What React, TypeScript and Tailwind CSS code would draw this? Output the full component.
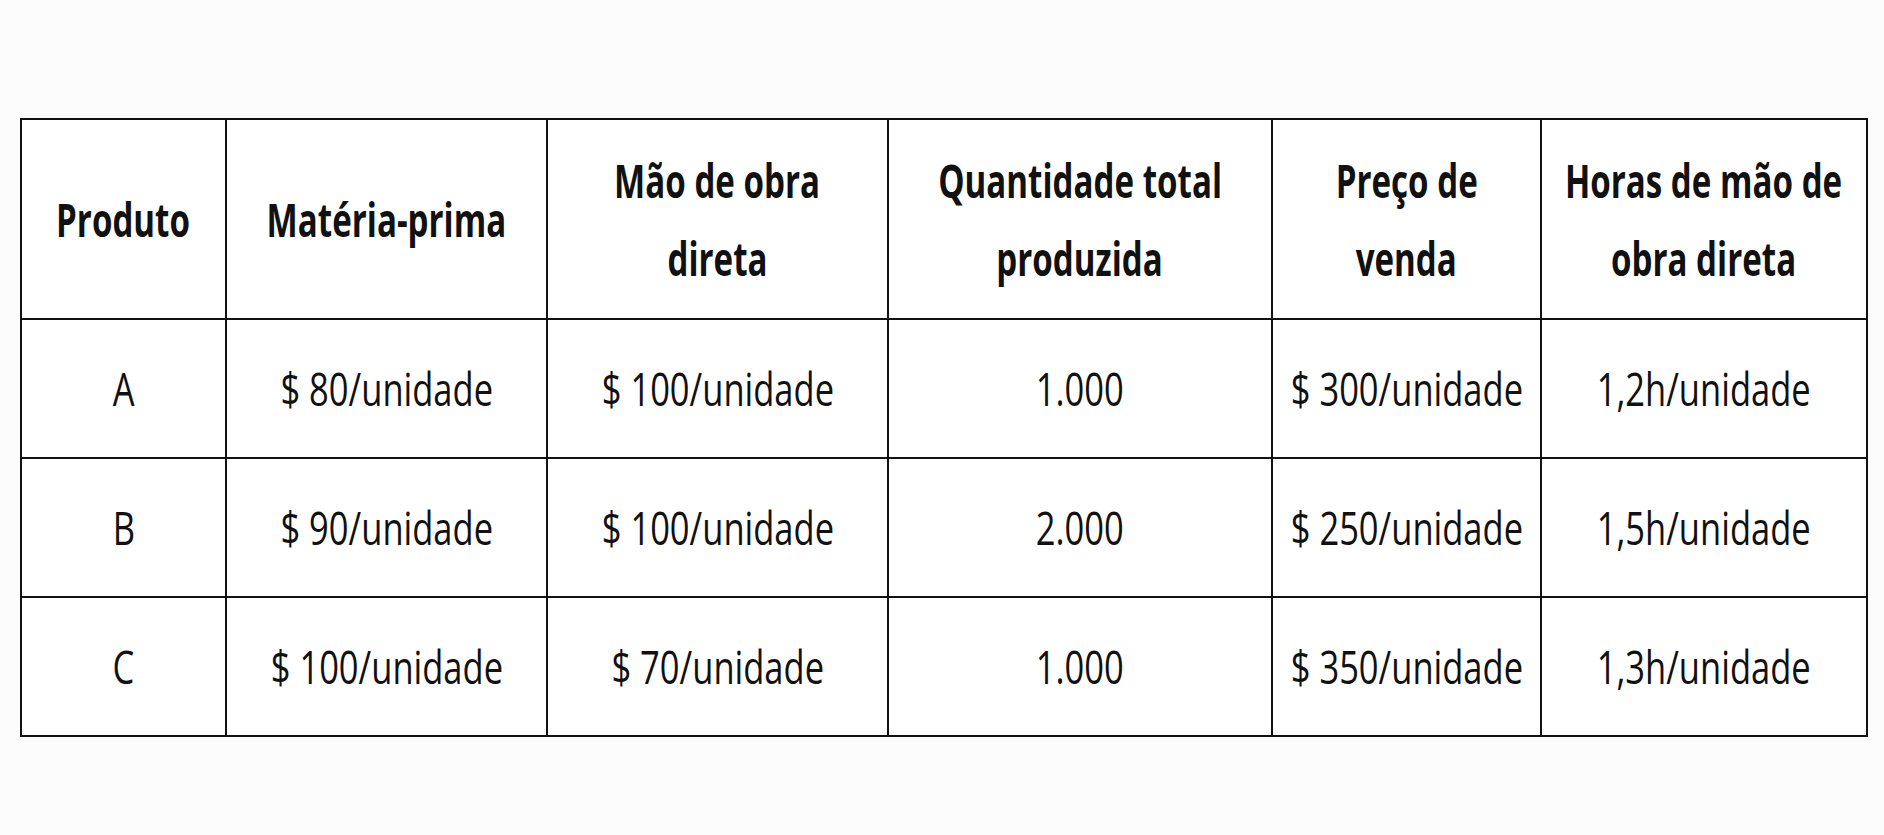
const headers: string[][] = [
  ["Produto"],
  ["Matéria-prima"],
  ["Mão de obra", "direta"],
  ["Quantidade total", "produzida"],
  ["Preço de", "venda"],
  ["Horas de mão de", "obra direta"],
];

const rows = [
  ["A", "$ 80/unidade", "$ 100/unidade", "1.000", "$ 300/unidade", "1,2h/unidade"],
  ["B", "$ 90/unidade", "$ 100/unidade", "2.000", "$ 250/unidade", "1,5h/unidade"],
  ["C", "$ 100/unidade", "$ 70/unidade", "1.000", "$ 350/unidade", "1,3h/unidade"],
];

export default function App() {
  return (
    <div className="min-h-screen w-full bg-[#fcfcfc] pt-[118px] pl-[20px] font-['Open_Sans','Noto_Sans',sans-serif] text-[#111]">
      <table className="table-fixed border-collapse w-[1846px] bg-white">
        <colgroup>
          <col className="w-[205px]" />
          <col className="w-[321px]" />
          <col className="w-[341px]" />
          <col className="w-[384px]" />
          <col className="w-[269px]" />
          <col className="w-[326px]" />
        </colgroup>
        <thead>
          <tr className="h-[200px]">
            {headers.map((lines, i) => (
              <th
                key={i}
                className="border-2 border-[#111] p-0 align-middle text-[46px] font-bold leading-[78px] whitespace-nowrap"
              >
                {lines.map((l, j) => (
                  <div key={j} className="flex justify-center">
                    <span className="inline-block shrink-0 scale-x-[0.72]">{l}</span>
                  </div>
                ))}
              </th>
            ))}
          </tr>
        </thead>
        <tbody>
          {rows.map((row, r) => (
            <tr key={r} className="h-[139px]">
              {row.map((cell, c) => (
                <td
                  key={c}
                  className="border-2 border-[#111] p-0 align-middle text-[46px] font-normal whitespace-nowrap"
                >
                  <div className="flex justify-center">
                    <span className="inline-block shrink-0 scale-x-[0.75]">{cell}</span>
                  </div>
                </td>
              ))}
            </tr>
          ))}
        </tbody>
      </table>
    </div>
  );
}
